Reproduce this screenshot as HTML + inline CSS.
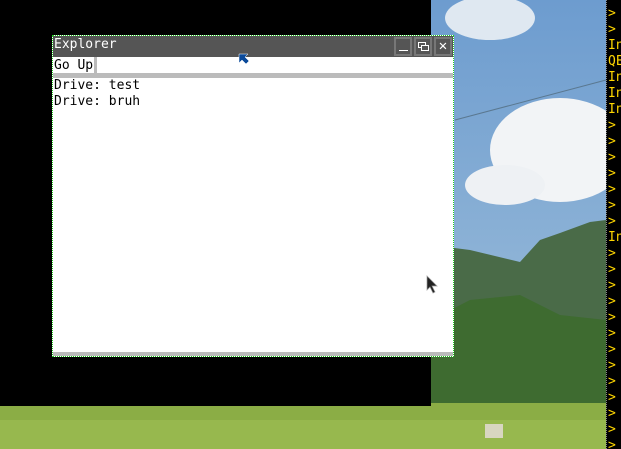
<!DOCTYPE html>
<html><head><style>
*{margin:0;padding:0;box-sizing:border-box}
body{width:621px;height:449px;overflow:hidden;position:relative;background:#000;font-family:"DejaVu Sans Mono","Liberation Mono",monospace}
.abs{position:absolute}
.term{left:606px;top:0;width:15px;height:449px;background:#000;border-left:1px dotted #888;color:#ffd700;font-size:13px;line-height:16px;overflow:hidden;white-space:pre;padding-left:1px;padding-top:6px}
</style></head><body>
<svg class="abs" style="left:0;top:0" width="621" height="449">
<defs>
<linearGradient id="sky" x1="0" y1="0" x2="0" y2="1"><stop offset="0" stop-color="#6d9ccf"/><stop offset="1" stop-color="#a3c2db"/></linearGradient>
</defs>
<rect width="621" height="449" fill="url(#sky)"/>
<ellipse cx="560" cy="150" rx="70" ry="52" fill="#f2f4f6"/>
<ellipse cx="505" cy="185" rx="40" ry="20" fill="#eef1f4"/>
<ellipse cx="490" cy="18" rx="45" ry="22" fill="#dfe8f1"/>
<line x1="455" y1="120" x2="606" y2="80" stroke="#5a7890" stroke-width="1"/>
<path d="M431 245 L470 250 L520 262 L540 240 L560 233 L590 222 L606 220 L606 410 L431 410Z" fill="#4a6b48"/>
<path d="M431 320 L470 300 L520 295 L560 315 L606 320 L606 410 L431 410Z" fill="#3e6b30"/>
<rect x="0" y="403" width="606" height="46" fill="#8bad45"/>
<rect x="0" y="420" width="606" height="29" fill="#97b84e"/>
<rect x="485" y="424" width="18" height="14" fill="#d8d6c0"/>
<rect x="0" y="0" width="431" height="406" fill="#000"/>
</svg>
<div class="abs" style="left:52px;top:35px;width:402px;height:322px;border:1px dotted #2c2;background:#fff">
 <div class="abs" style="left:0;top:0;width:400px;height:21px;background:#555;color:#fff;font-size:13px;line-height:18px;padding-left:1px">Explorer</div>
 <div class="abs" style="left:341px;top:1px;width:18px;height:19px;border:2px solid #777"><div class="abs" style="left:3px;top:11px;width:9px;height:1px;background:#fff"></div></div>
 <div class="abs" style="left:361px;top:1px;width:18px;height:19px;border:2px solid #777">
  <div class="abs" style="left:2px;top:3px;width:8px;height:6px;border:1px solid #fff"></div>
  <div class="abs" style="left:5px;top:6px;width:8px;height:6px;border:1px solid #fff;background:#555"></div></div>
 <div class="abs" style="left:381px;top:1px;width:18px;height:19px;border:2px solid #777;color:#fff;font-size:14px;line-height:14px;text-align:center">✕</div>
 <div class="abs" style="left:0;top:21px;width:41px;height:17px;font-size:13px;line-height:17px;color:#000;padding-left:1px;background:#fff">Go Up</div>
 <div class="abs" style="left:41px;top:21px;width:3px;height:17px;background:#bbb"></div>
 <div class="abs" style="left:0;top:37px;width:400px;height:5px;background:#bbb"></div>
 <div class="abs" style="left:1px;top:42px;font-size:13px;line-height:16px;color:#000;white-space:pre">Drive: test
Drive: bruh</div>
 <div class="abs" style="left:0;top:316px;width:400px;height:4px;background:#bbb"></div>
</div>
<svg class="abs" style="left:238px;top:53px" width="12" height="12"><path d="M1 1 L10 1 L7 4 L11 8 L8 11 L4 7 L1 10Z" fill="#0b4a9a" stroke="#fff" stroke-width="0.5"/></svg>
<svg class="abs" style="left:426px;top:275px" width="14" height="20"><path d="M1 1 L1 15 L4 12 L7 18 L9 17 L6 11 L11 11Z" fill="#222" stroke="#999" stroke-width="0.7"/></svg>
<div class="abs term">>
>
In
QE
In
In
In
>
>
>
>
>
>
>
In
>
>
>
>
>
>
>
>
>
>
>
>
></div>
</body></html>
